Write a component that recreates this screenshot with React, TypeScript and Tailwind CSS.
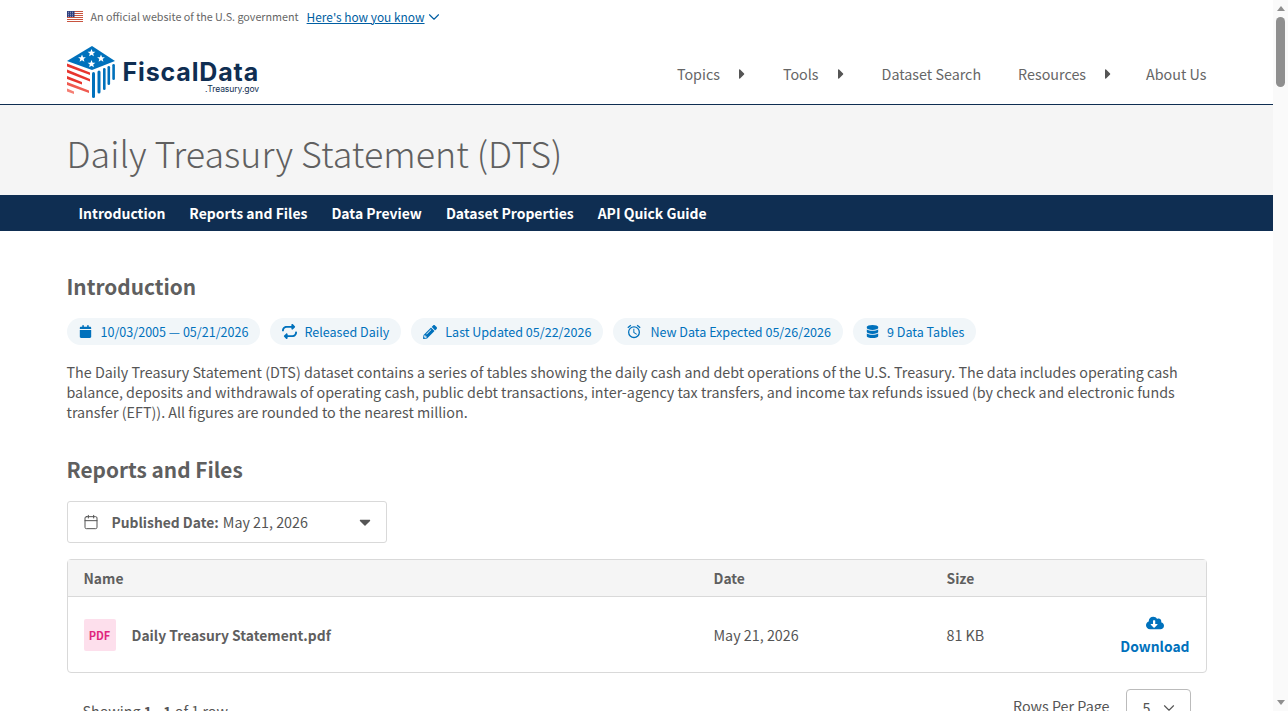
import React from "react";
import { FaCaretRight, FaCaretDown, FaPencilAlt, FaDatabase, FaCloudDownloadAlt } from "react-icons/fa";
import { FaCalendar, FaRepeat } from "react-icons/fa6";
import { MdOutlineAlarm } from "react-icons/md";
import { LuCalendar, LuChevronDown } from "react-icons/lu";

const font = { fontFamily: '"Noto Sans CJK JP", "Noto Sans", sans-serif' };

function Flag() {
  return (
    <svg width="16" height="11" viewBox="0 0 16 11" className="shrink-0">
      <rect width="16" height="11" fill="#fff" />
      {[0, 2, 4, 6, 8, 10].map((y) => (
        <rect key={y} y={y} width="16" height="1" fill="#c8543f" />
      ))}
      <rect width="7.5" height="6" fill="#2e3f7f" />
      {[1, 3, 5].map((y) => [1, 3, 5].map((x) => <rect key={`${x}-${y}`} x={x + 0.2} y={y - 0.2} width="0.8" height="0.8" fill="#dfe3f2" />))}
    </svg>
  );
}

function Logo() {
  return (
    <svg width="48" height="52" viewBox="0 0 48 52" className="shrink-0">
      <path d="M25 0 L48 15 L25 24 L0 15 Z" fill="#0071bc" />
      {[[24.5, 7], [15, 12.5], [34, 12.5], [24.5, 18]].map(([x, y], i) => (
        <path
          key={i}
          transform={`translate(${x} ${y})`}
          d="M0 -4 L1.1 -1.3 L3.9 -1.2 L1.7 0.5 L2.4 3.3 L0 1.8 L-2.4 3.3 L-1.7 0.5 L-3.9 -1.2 L-1.1 -1.3 Z"
          fill="#fff"
        />
      ))}
      <g fill="#e8352e">
        <path d="M0 17.5 L23 26.5 V29 L0 20.5 Z" />
        <path d="M0 23.5 L23 33 V35.5 L0 26.5 Z" />
        <path d="M0 30 L15 36 V38.5 L0 33 Z" />
        <path d="M0 36 L22 44.5 V47 L0 39 Z" fill="#ef5a50" />
        <path d="M0 42.5 L7 45.5 V48 L0 45.5 Z" fill="#f57f74" />
      </g>
      <g fill="#0071bc">
        <rect x="25" y="26" width="3" height="26" rx="1.5" />
        <rect x="30.5" y="24.5" width="3" height="23" rx="1.5" />
        <rect x="36" y="22" width="2.6" height="22" rx="1.3" />
        <rect x="40.5" y="20" width="2.6" height="19" rx="1.3" />
        <rect x="45.3" y="18" width="2.6" height="16" rx="1.3" />
      </g>
    </svg>
  );
}

function Pill({ icon, children, pad }: { icon: React.ReactNode; children: React.ReactNode; pad: string }) {
  return (
    <div className={`flex h-[27px] items-center rounded-full bg-[#f1f6f9] text-[12.55px] text-[#0071bc] ${pad}`}>
      <span className="flex w-[16px] justify-center">{icon}</span>
      {children}
    </div>
  );
}

function NavItem({ label, caret, className }: { label: string; caret?: boolean; className?: string }) {
  return (
    <div className={`flex items-center ${className ?? ""}`}>
      <span>{label}</span>
      {caret && <FaCaretRight className="ml-[19px] h-[16px] w-[6px] text-[#555]" />}
    </div>
  );
}

function Scrollbar() {
  return (
    <div className="flex h-full w-[15px] shrink-0 flex-col items-center bg-[#fafafa]">
      <div className="mt-[6px] h-0 w-0 border-x-[4.5px] border-b-[5px] border-x-transparent border-b-[#8f8f8f]" />
      <div className="mt-[6px] h-[70px] w-[9px] rounded-full bg-[#8f8f8f]" />
      <div className="mb-[6px] mt-auto h-0 w-0 border-x-[4.5px] border-t-[5px] border-x-transparent border-t-[#8f8f8f]" />
    </div>
  );
}

export default function App() {
  return (
    <div style={font} className="flex h-[711px] overflow-hidden bg-white text-[14.32px] leading-[20px] text-[#555]">
      <div className="min-w-0 flex-1">
        <div className="mx-auto w-[1140px]">
          <div className="flex h-[33px] items-center">
            <Flag />
            <span className="ml-[8px] text-[10.75px] text-[#666]">An official website of the U.S. government</span>
            <span className="ml-[8px] text-[11.9px] text-[#005ea2] underline">Here's how you know</span>
            <LuChevronDown className="text-[18px] text-[#005ea2]" strokeWidth={1.5} />
          </div>
          <div className="flex h-[71px] items-start justify-between">
            <div className="mt-[13px] flex">
              <Logo />
              <div className="ml-[8px] mt-[14px] flex flex-col items-end" style={{ fontFamily: "Inter, sans-serif" }}>
                <span className="text-[25px] leading-[24px] font-bold tracking-[0.85px] text-[#0f2e52]">FiscalData</span>
                <span className="text-[8.6px] leading-[10px] tracking-[-0.1px] text-[#0f2e52]">.Treasury.gov</span>
              </div>
            </div>
            <div className="mt-[31px] flex gap-[38px] text-[#666]">
              <NavItem label="Topics" caret />
              <NavItem label="Tools" caret />
              <NavItem label="Dataset Search" className="-mr-[1px]" />
              <NavItem label="Resources" caret className="-mr-[3px]" />
              <NavItem label="About Us" />
            </div>
          </div>
        </div>

        <div className="h-[91px] border-t border-[#0f2e52] bg-[#f5f5f5]">
          <h1 className="mx-auto w-[1140px] pt-[23px] text-[35.85px] leading-[48px] font-light text-[#606060]">Daily Treasury Statement (DTS)</h1>
        </div>

        <div className="h-[36px] bg-[#0f2e52]">
          <div className="mx-auto flex h-full w-[1140px] items-center gap-[24px] px-[12px] text-[13.95px] font-bold text-white">
            <span>Introduction</span>
            <span>Reports and Files</span>
            <span>Data Preview</span>
            <span>Dataset Properties</span>
            <span>API Quick Guide</span>
          </div>
        </div>

        <div className="mx-auto w-[1140px]">
          <h2 className="mt-[40px] text-[20.8px] leading-[30px] font-bold text-[#5f5f5f]">Introduction</h2>
          <div className="mt-[17px] flex gap-[10px]">
            <Pill pad="pl-[11px] pr-[12px] gap-[7px]" icon={<FaCalendar className="text-[13px]" />}>10/03/2005 — 05/21/2026</Pill>
            <Pill pad="pl-[11px] pr-[12px] gap-[7px]" icon={<FaRepeat className="text-[15px]" />}>Released Daily</Pill>
            <Pill pad="pl-[11px] pr-[12px] gap-[7px]" icon={<FaPencilAlt className="text-[14px]" />}>Last Updated 05/22/2026</Pill>
            <Pill pad="pl-[13px] pr-[12px] gap-[8px]" icon={<MdOutlineAlarm className="text-[17px]" />}>New Data Expected 05/26/2026</Pill>
            <Pill pad="pl-[11px] pr-[12px] gap-[7px]" icon={<FaDatabase className="text-[13px]" />}>9 Data Tables</Pill>
          </div>
          <p className="mt-[17px]">
            The Daily Treasury Statement (DTS) dataset contains a series of tables showing the daily cash and debt operations of the U.S. Treasury. The data includes operating cash balance, deposits and withdrawals of operating cash, public debt transactions, inter-agency tax transfers, and income tax refunds issued (by check and electronic funds transfer (EFT)). All figures are rounded to the nearest million.
          </p>

          <h2 className="mt-[32px] text-[20.8px] leading-[30px] font-bold text-[#5f5f5f]">Reports and Files</h2>
          <div className="mt-[17px] flex h-[42px] w-[320px] items-center rounded-[3px] border border-[#d9d9d9] pl-[15px] pr-[12px]">
            <LuCalendar className="text-[16px] text-[#555]" strokeWidth={1.5} />
            <span className="ml-[13px] text-[13.85px] font-bold text-[#5f5f5f]">Published Date:</span>
            <span className="ml-[4px]">May 21, 2026</span>
            <FaCaretDown className="ml-auto text-[18px] text-[#555]" />
          </div>

          <div className="mt-[16px] rounded-[4px] border border-[#d9d9d9]">
            <div className="grid h-[37px] grid-cols-[630px_233px_1fr] items-center border-b border-[#d9d9d9] bg-[#f5f5f5] px-[16px] text-[13.85px] font-bold text-[#5f5f5f]">
              <span>Name</span>
              <span>Date</span>
              <span>Size</span>
            </div>
            <div className="grid h-[75px] grid-cols-[630px_233px_1fr_auto] items-center pl-[16px] pr-[16px]">
              <div className="flex items-center">
                <span className="flex h-[32px] w-[32px] items-center justify-center rounded-[2px] bg-[#fddfec] text-[11px] font-bold text-[#e0267e]">PDF</span>
                <span className="ml-[16px] text-[13.85px] font-bold text-[#5f5f5f]">Daily Treasury Statement.pdf</span>
              </div>
              <span>May 21, 2026</span>
              <span>81 KB</span>
              <div className="flex flex-col items-center text-[13.85px] font-bold text-[#0071bc]">
                <FaCloudDownloadAlt className="mb-[4px] text-[18px]" />
                <span>Download</span>
              </div>
            </div>
          </div>

          <div className="mt-[16px] flex items-start justify-between px-[16px]">
            <span className="mt-[12px]">Showing <b className="text-[13.85px] font-bold">1 - 1</b> of 1 row</span>
            <div className="flex">
              <span className="mt-[7px]">Rows Per Page</span>
              <div className="ml-[16px] flex h-[38px] w-[65px] items-center gap-[10px] rounded-[4px] border border-[#bbb] pl-[16px]">
                <span>5</span>
                <LuChevronDown className="text-[18px]" strokeWidth={1.5} />
              </div>
            </div>
          </div>
        </div>
      </div>
      <Scrollbar />
    </div>
  );
}
